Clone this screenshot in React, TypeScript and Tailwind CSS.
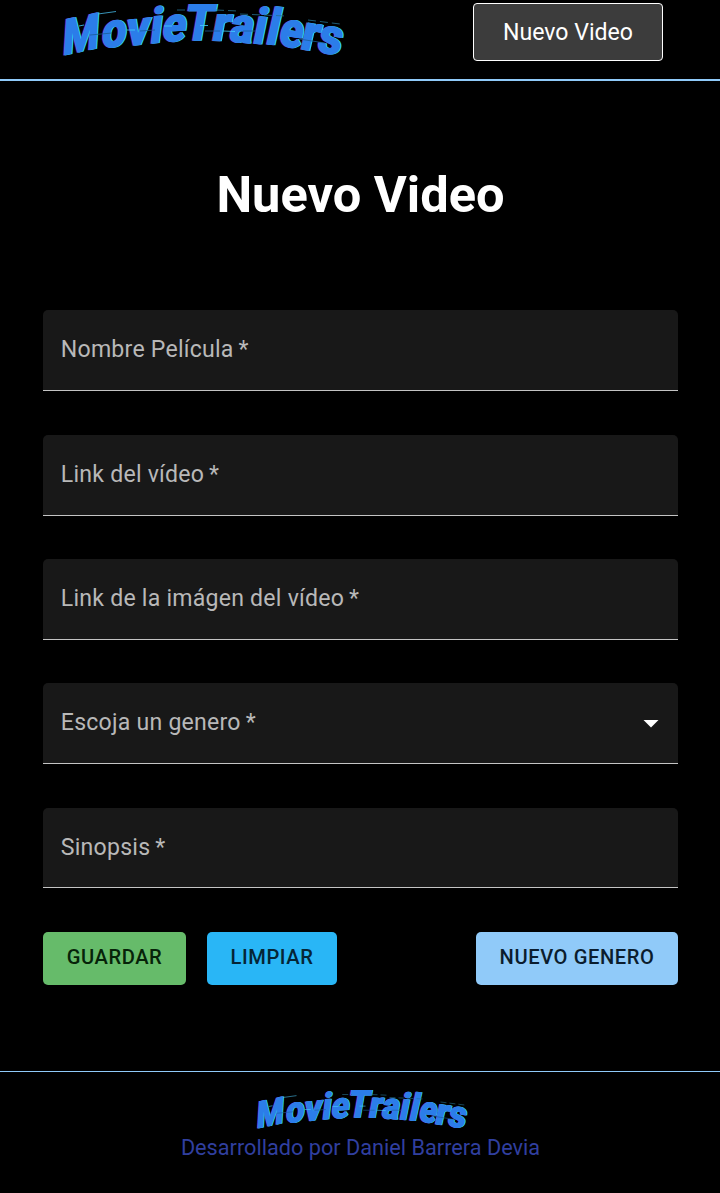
const ROBOTO = "font-['Roboto',sans-serif]";

type Glyph = { c: string; x: number; y: number; sx: number; sy: number; slope: number; skew: number };

const glyphs: Glyph[] = [
  { c: 'M', x: 62, y: 55, sx: 0.82, sy: 0.98, slope: -0.17, skew: -0.06 },
  { c: 'o', x: 101, y: 48.2, sx: 0.86, sy: 0.96, slope: -0.12, skew: -0.08 },
  { c: 'v', x: 125.5, y: 45.8, sx: 0.9, sy: 0.96, slope: -0.1, skew: -0.1 },
  { c: 'i', x: 149, y: 43, sx: 0.88, sy: 0.98, slope: -0.07, skew: -0.12 },
  { c: 'e', x: 161, y: 41.6, sx: 0.86, sy: 0.96, slope: -0.04, skew: -0.14 },
  { c: 'T', x: 182.5, y: 40, sx: 0.92, sy: 0.99, slope: 0, skew: -0.17 },
  { c: 'r', x: 210.5, y: 40, sx: 0.96, sy: 0.96, slope: 0.04, skew: -0.18 },
  { c: 'a', x: 228, y: 41, sx: 0.86, sy: 0.96, slope: 0.07, skew: -0.18 },
  { c: 'i', x: 251.5, y: 42.8, sx: 0.9, sy: 0.98, slope: 0.08, skew: -0.2 },
  { c: 'l', x: 264.5, y: 43.6, sx: 0.9, sy: 0.98, slope: 0.09, skew: -0.22 },
  { c: 'e', x: 277.5, y: 45, sx: 0.84, sy: 0.96, slope: 0.12, skew: -0.2 },
  { c: 'r', x: 299, y: 48.5, sx: 0.96, sy: 0.96, slope: 0.15, skew: -0.22 },
  { c: 's', x: 316, y: 51, sx: 0.9, sy: 0.96, slope: 0.16, skew: -0.22 },
];

function Letters({ fill, dx, hidden }: { fill: string; dx: number; hidden?: boolean }) {
  return (
    <g fill={fill} stroke={fill} strokeWidth={1.7} aria-hidden={hidden}>
      {glyphs.map((g, i) => (
        <text
          key={i}
          fontSize={50}
          className="font-['Roboto',sans-serif] font-bold"
          transform={`matrix(${g.sx} ${g.slope} ${g.skew} ${g.sy} ${g.x + dx} ${g.y})`}
        >
          {g.c}
        </text>
      ))}
    </g>
  );
}

function Logo({ className }: { className: string }) {
  return (
    <svg viewBox="62 0 284 60" className={className} role="img" aria-label="MovieTrailers">
      <Letters fill="#6b1f6e" dx={-0.8} hidden />
      <Letters fill="#2ccdf2" dx={1.3} hidden />
      <Letters fill="#2b7de9" dx={0} />
      <g fill="none" strokeWidth="0.8">
        <path d="M98 14L116 11.5" stroke="#45b9e6" />
        <path d="M177 10H190M216 10L238 11M240 14L286 16M308 20L340 24" stroke="#23708f" strokeDasharray="8 4" />
        <path d="M79 26L84 25M127 30H135M164 26L172 26M200 25.5H208M223 31L235 31.5" stroke="#42cfff" />
        <path d="M90 35L112 33M140 31L155 30M205 31H220M243 31H256M299 39L325 43" stroke="#1c5c96" />
      </g>
    </svg>
  );
}

function Field({ label, select }: { label: string; select?: boolean }) {
  return (
    <div className="flex h-[80.85px] items-center justify-between rounded-t-[5px] border-b border-[#c4c4c4] bg-[#181818] pl-[17.8px] pr-[19.5px]">
      <label className="pb-[1px] text-[23.1px] leading-[33px] tracking-[0.225px] text-[#b8b8b8]">{label}{'\u2009'}*</label>
      {select && (
        <svg viewBox="0 0 16 8" className="mt-[1px] h-2 w-4" aria-hidden="true">
          <path d="M0.5 0H15.5L8 7.5Z" fill="#fff" />
        </svg>
      )}
    </div>
  );
}

export default function App() {
  return (
    <div className={`${ROBOTO} flex h-[1193px] w-[720px] flex-col overflow-hidden bg-black text-white`}>
      <header className="flex h-[81px] shrink-0 items-start justify-between border-b-2 border-[#90caf9] pl-[62px] pr-[57px]">
        <Logo className="h-[60px] w-[284px]" />
        <button className="mt-[3px] h-[58px] w-[190px] rounded-[4px] border border-white bg-[#3c3c3c] pt-[2px] text-[23.1px] leading-[34px]">
          Nuevo Video
        </button>
      </header>

      <main className="flex h-[990px] shrink-0 flex-col px-[43px] pr-[42px]">
        <h1 className="mt-[78px] text-center text-[50.6px] font-bold leading-[72px]">Nuevo Video</h1>
        <form className="mt-[79.4px] flex flex-col">
          <div className="flex flex-col gap-[43.47px]">
            <Field label="Nombre Película" />
            <Field label="Link del vídeo" />
            <Field label="Link de la imágen del vídeo" />
            <Field label="Escoja un genero" select />
            <Field label="Sinopsis" />
          </div>
          <div className="mt-[43.5px] flex text-[20.15px] font-medium tracking-[0.576px]">
            <button type="button" className="h-[53px] w-[143px] rounded-[5px] bg-[#66bb6a] pb-[3px] text-[#062309]">GUARDAR</button>
            <button type="button" className="ml-[21px] h-[53px] w-[130px] rounded-[5px] bg-[#29b6f6] pb-[3px] text-[#052536]">LIMPIAR</button>
            <button type="button" className="ml-auto h-[53px] w-[202px] rounded-[5px] bg-[#90caf9] pb-[3px] text-[#0b1d2e]">NUEVO GENERO</button>
          </div>
        </form>
      </main>

      <footer className="flex flex-1 flex-col items-center border-t border-[#90caf9]">
        <Logo className="ml-[4px] mt-[15px] h-[45px] w-[213px]" />
        <p className="ml-px text-[21.7px] leading-[32px] text-[#303f9f]">Desarrollado por Daniel Barrera Devia</p>
      </footer>
    </div>
  );
}
